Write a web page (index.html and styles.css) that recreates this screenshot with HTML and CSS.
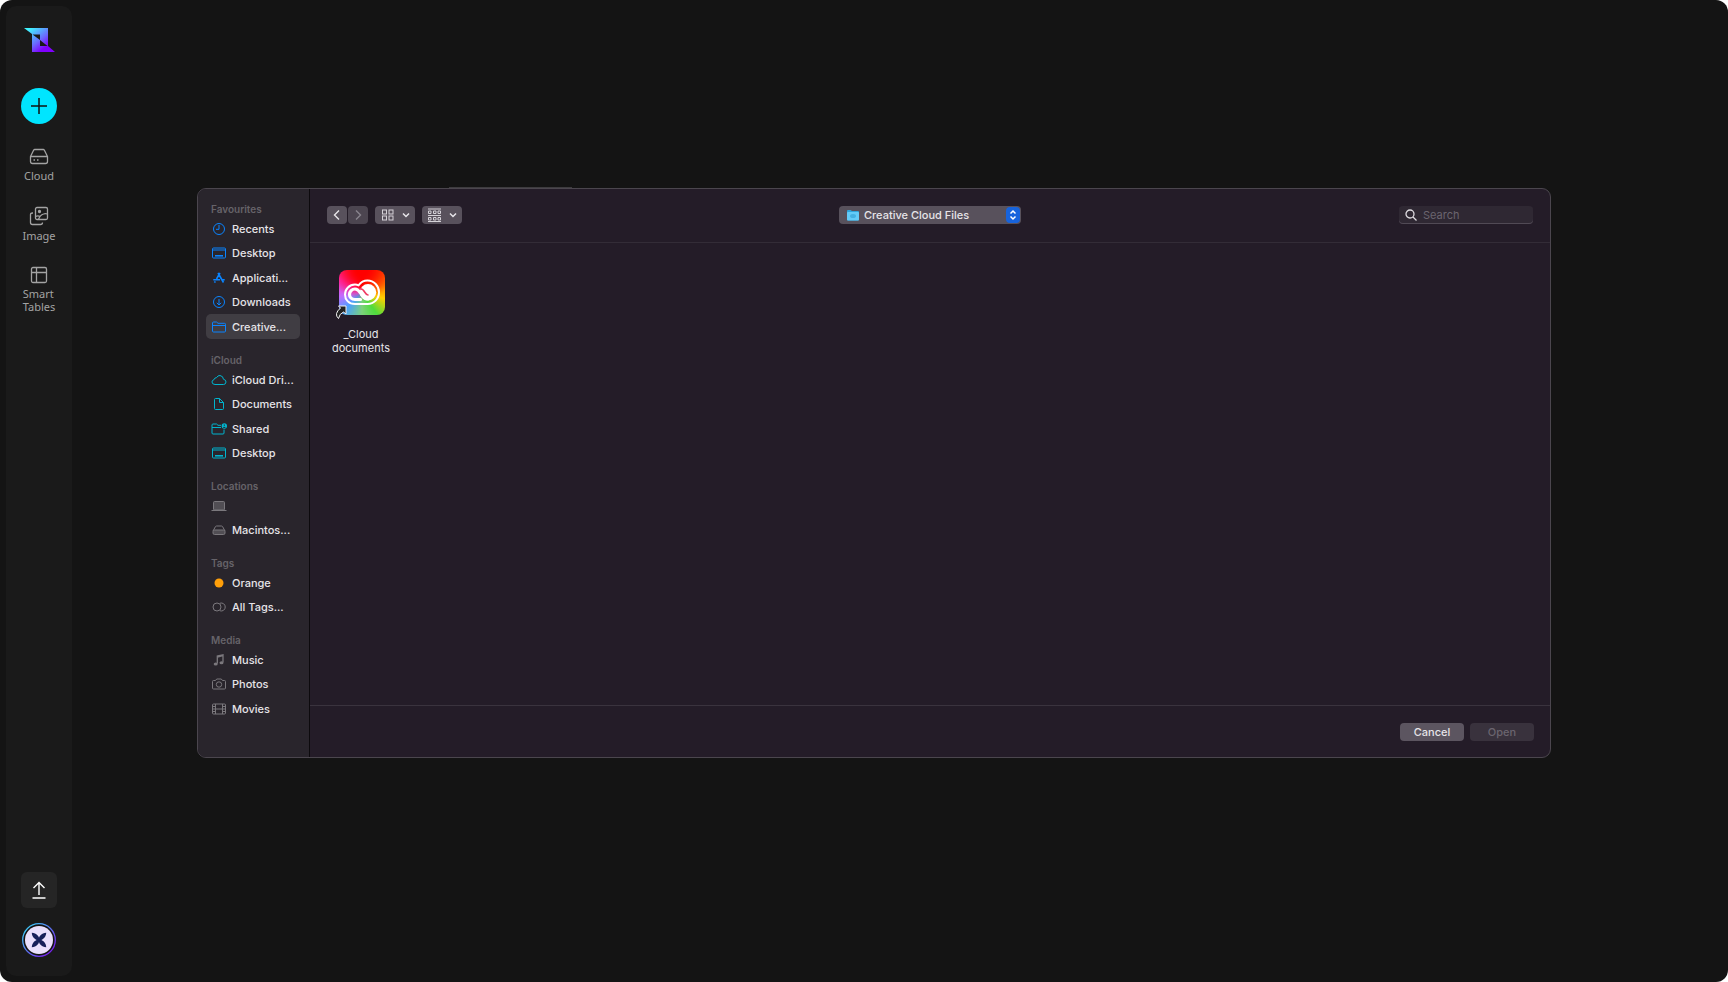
FILE: index.html
```html
<!DOCTYPE html>
<html lang="en">
<head>
	<meta charset="utf-8">
	<title>Files</title>

	<link rel="stylesheet" href="styles.css">
</head>
<body>
	<div class="app">
		<nav class="rail">
			<svg class="logo" width="31" height="24" viewBox="0 0 31 24">
				<defs>
					<linearGradient id="logoFill" x1="0" y1="0" x2="1" y2="1">
						<stop offset="0.1" stop-color="#3ff5ff"/>
						<stop offset="0.5" stop-color="#6a6cff"/>
						<stop offset="0.75" stop-color="#8000ff"/>
					</linearGradient>
				</defs>
				<path fill="url(#logoFill)" fill-rule="evenodd" d="M0 0H24V18L31 24H8V6ZM8.500 6.500L16 12V6.500ZM16 12V18H23.500Z"/>
			</svg>
			<button class="add" aria-label="New">
				<svg width="16" height="16" viewBox="0 0 16 16" fill="none" stroke="#111" stroke-width="1.500"><path d="M8 0V16M0 8H16"/></svg>
			</button>
			<a class="rail-link" href="#">
				<svg width="20" height="18" viewBox="0 0 20 18" fill="none" stroke="#a3a3a3" stroke-width="1.300" stroke-linejoin="round"><path d="M1.500 8.500L4.600 2.200Q5 1.500 5.800 1.500H14.200Q15 1.500 15.400 2.200L18.500 8.500V13.500Q18.500 15.500 16.500 15.500H3.500Q1.500 15.500 1.500 13.500ZM1.500 8.500H18.500M4.500 12H6M8 12H9.500"/></svg>
				<span>Cloud</span>
			</a>
			<a class="rail-link" href="#">
				<svg width="20" height="20" viewBox="0 0 20 20" fill="none" stroke="#a3a3a3" stroke-width="1.300" stroke-linejoin="round"><rect x="6.500" y="1.500" width="12" height="12" rx="1.500"/><path d="M4 7H3.500Q1.500 7 1.500 8.500V16.500Q1.500 18.500 3.500 18.500H11.500Q13.500 18.500 13.500 16.500M9.500 13.500Q11 9 14.500 8Q16.500 7.300 18.500 8M6.500 10.500Q9 9.200 11 10.500"/><circle cx="10.500" cy="5.500" r="1" fill="#a3a3a3"/></svg>
				<span>Image</span>
			</a>
			<a class="rail-link" href="#">
				<svg width="20" height="18" viewBox="0 0 20 18" fill="none" stroke="#a3a3a3" stroke-width="1.300"><rect x="2.500" y="1.500" width="15" height="15" rx="1.500"/><path d="M2.500 6.500H17.500M7.500 1.500V16.500"/></svg>
				<span>Smart<br>Tables</span>
			</a>
			<div class="rail-bottom">
				<button class="upload" aria-label="Upload">
					<svg width="18" height="18" viewBox="0 0 18 18" fill="none" stroke="#fff" stroke-width="1.400"><path d="M9 14V2M3.500 7L9 1.500L14.500 7M2.500 17H15.500"/></svg>
				</button>
				<button class="avatar" aria-label="Account">
					<svg width="34" height="34" viewBox="0 0 34 34">
						<defs>
							<linearGradient id="ring" x1="0" y1="0" x2="1" y2="1">
								<stop offset="0.1" stop-color="#3ecbf5"/>
								<stop offset="0.9" stop-color="#7a18f0"/>
							</linearGradient>
						</defs>
						<circle cx="17" cy="17" r="16.300" fill="#141414" stroke="url(#ring)" stroke-width="1.300"/>
						<circle cx="17" cy="17" r="14" fill="#eadffc"/>
						<g fill="#17205a">
							<path id="leaf" d="M17.500 17.500C13.500 17.500 10 14.500 9.800 9.800C14.500 10 17.500 13.500 17.500 17.500Z"/>
							<use href="#leaf" transform="rotate(90 17 17)"/>
							<use href="#leaf" transform="rotate(180 17 17)"/>
							<use href="#leaf" transform="rotate(270 17 17)"/>
						</g>
					</svg>
				</button>
			</div>
		</nav>

		<main class="stage">
			<div class="dialog" role="dialog" aria-label="Open file">
				<aside class="places">
					<section class="group">
						<h2>Favourites</h2>
						<a href="#" class="blue"><svg viewBox="0 0 16 16"><circle cx="8" cy="8" r="5.500"/><path d="M8 4V8.300H5"/></svg>Recents</a>
						<a href="#" class="blue"><svg viewBox="0 0 16 16"><rect x="1.500" y="3" width="13" height="10" rx="1"/><path d="M2 5H14"/><path d="M4 10.800H12" stroke-width="1.600"/></svg>Desktop</a>
						<a href="#" class="blue"><svg viewBox="0 0 16 16"><path d="M7 3L12.500 12.500M9 3L5.500 9M4.300 11.300L3.500 12.700M2.300 9.800H9M11 9.800H13.700" stroke-width="1.600"/></svg>Applicati...</a>
						<a href="#" class="blue"><svg viewBox="0 0 16 16"><circle cx="8" cy="8" r="5.500"/><path d="M8 5V11M5.800 8.800L8 11L10.200 8.800"/></svg>Downloads</a>
						<a href="#" class="blue current"><svg viewBox="0 0 16 16"><path d="M1.500 12V4Q1.500 3 2.500 3H5.500L7 4.300H13.500Q14.500 4.300 14.500 5.300V12Q14.500 13 13.500 13H2.500Q1.500 13 1.500 12ZM1.500 6.500H14.500"/></svg>Creative...</a>
					</section>
					<section class="group">
						<h2>iCloud</h2>
						<a href="#" class="teal"><svg viewBox="0 0 16 16"><path d="M4 12.500Q1 12.300 1 10Q1 8 3 7.700Q3.500 5.500 5.500 5.700Q6.800 3.300 9 3.500Q12.200 4 12.500 7.300Q15 7.700 15 10Q14.800 12.500 12.500 12.500Z"/></svg>iCloud Dri...</a>
						<a href="#" class="teal"><svg viewBox="0 0 16 16"><path d="M4.500 2.500H8.500L12.500 6.500V12.500Q12.500 13.500 11.500 13.500H4.500Q3.500 13.500 3.500 12.500V3.500Q3.500 2.500 4.500 2.500ZM8.500 2.500V6.500H12.500"/></svg>Documents</a>
						<a href="#" class="teal"><svg viewBox="0 0 16 16"><path d="M10 4.300H7L5.500 3H2Q1 3 1 4V12Q1 13 2 13H12Q13 13 13 12V8.500M1 6.500H10"/><circle cx="13.300" cy="5" r="2.700" fill="currentColor" stroke="none"/><path d="M13.300 3.500V4.800M12.200 6.400H14.400" stroke="#29252c"/></svg>Shared</a>
						<a href="#" class="teal"><svg viewBox="0 0 16 16"><rect x="1.500" y="3" width="13" height="10" rx="1"/><path d="M2 5H14"/><path d="M4 10.800H12" stroke-width="1.600"/></svg>Desktop</a>
					</section>
					<section class="group">
						<h2>Locations</h2>
						<a href="#" class="grey" aria-label="This computer"><svg viewBox="0 0 16 16"><rect x="2.500" y="3.500" width="11" height="8.500" rx="1" fill="#514e54"/><path d="M0.500 12.500H15.500"/></svg></a>
						<a href="#" class="grey"><svg viewBox="0 0 16 16"><path d="M2 9L4.500 4.500Q4.800 4 5.500 4H10.500Q11.200 4 11.500 4.500L14 9"/><rect x="2" y="8" width="12" height="4.500" rx="1.500" fill="#514e54"/></svg>Macintos...</a>
					</section>
					<section class="group">
						<h2>Tags</h2>
						<a href="#"><svg viewBox="0 0 16 16"><circle cx="8" cy="8" r="4.500" fill="#ff9f0a" stroke="none"/></svg>Orange</a>
						<a href="#" class="grey"><svg viewBox="0 0 16 16"><circle cx="6" cy="8" r="4"/><path d="M9 4.200A4 4 0 1 1 9 11.800"/></svg>All Tags...</a>
					</section>
					<section class="group">
						<h2>Media</h2>
						<a href="#" class="grey"><svg viewBox="0 0 16 16"><path d="M6.300 11.500V4L12 2.700V10.300M6.300 5L12 3.700" stroke-width="1.300"/><ellipse cx="4.700" cy="12" rx="2" ry="1.500" fill="currentColor" stroke="none"/><ellipse cx="10.500" cy="10.700" rx="2" ry="1.500" fill="currentColor" stroke="none"/></svg>Music</a>
						<a href="#" class="grey"><svg viewBox="0 0 16 16"><path d="M2.500 4.500H4.500L5.700 3H10.300L11.500 4.500H13.500Q14.500 4.500 14.500 5.500V12Q14.500 13 13.500 13H2.500Q1.500 13 1.500 12V5.500Q1.500 4.500 2.500 4.500Z"/><circle cx="8" cy="8.500" r="2.700"/></svg>Photos</a>
						<a href="#" class="grey"><svg viewBox="0 0 16 16"><rect x="1.500" y="3" width="13" height="10" rx="1"/><path d="M4.500 3V13M11.500 3V13M4.500 8H11.500M2 5.500H4.500M2 8H4.500M2 10.500H4.500M11.500 5.500H14M11.500 8H14M11.500 10.500H14"/></svg>Movies</a>
					</section>
				</aside>

				<div class="browser">
					<header class="toolbar">
						<div class="tools">
							<div class="history">
								<button class="tool" aria-label="Back"><svg width="8" height="12" viewBox="0 0 8 12" fill="none" stroke="#e8e6ea" stroke-width="1.400"><path d="M6 1.500L1.500 6L6 10.500"/></svg></button>
								<button class="tool" aria-label="Forward" disabled><svg width="8" height="12" viewBox="0 0 8 12" fill="none" stroke="#89848d" stroke-width="1.400"><path d="M2 1.500L6.500 6L2 10.500"/></svg></button>
							</div>
							<button class="tool wide" aria-label="Icon view">
								<svg width="14" height="12" viewBox="0 0 14 12" fill="none" stroke="#d5d2d8"><rect x="2.500" y="1" width="4" height="4"/><rect x="9" y="1" width="4" height="4"/><rect x="2.500" y="7" width="4" height="4"/><rect x="9" y="7" width="4" height="4"/></svg>
								<svg width="8" height="6" viewBox="0 0 8 6" fill="none" stroke="#e8e6ea" stroke-width="1.500"><path d="M1 1.500L4 4.500L7 1.500"/></svg>
							</button>
							<button class="tool wide" aria-label="Group items">
								<svg width="14" height="14" viewBox="0 0 14 14" fill="none" stroke="#d5d2d8"><path d="M1 1H14M1 7.500H14M1 13.500H14"/><path d="M1.500 3H4V5.500H1.500ZM6.500 3H9V5.500H6.500ZM11 3H13.500V5.500H11ZM1.500 9.500H4V12H1.500ZM6.500 9.500H9V12H6.500ZM11 9.500H13.500V12H11Z"/></svg>
								<svg width="8" height="6" viewBox="0 0 8 6" fill="none" stroke="#e8e6ea" stroke-width="1.500"><path d="M1 1.500L4 4.500L7 1.500"/></svg>
							</button>
						</div>
						<div class="folder">
							<svg width="14" height="12" viewBox="0 0 14 12"><path d="M1 2Q1 1 2 1H4.500L6 2H12Q13 2 13 3V10.500Q13 11.500 12 11.500H2Q1 11.500 1 10.500Z" fill="#2fa5dc"/><rect x="1" y="3" width="12" height="8.500" rx="1" fill="#63cbf8"/><ellipse cx="7" cy="7" rx="3" ry="2" fill="#43b0e2"/></svg>
							<select aria-label="Folder"><option>Creative Cloud Files</option></select>
							<span class="stepper"><svg width="8" height="12" viewBox="0 0 8 12" fill="none" stroke="#fff" stroke-width="1.500"><path d="M1.500 4.500L4 2L6.500 4.500M1.500 7.500L4 10L6.500 7.500"/></svg></span>
						</div>
						<label class="search">
							<svg width="12" height="12" viewBox="0 0 12 12" fill="none" stroke="#dedbe0" stroke-width="1.300"><circle cx="5" cy="5" r="4"/><path d="M8 8L11.500 11.500"/></svg>
							<input type="text" placeholder="Search" aria-label="Search">
						</label>
					</header>
					<div class="files">
						<a class="file" href="#">
							<svg width="54" height="50" viewBox="0 0 54 50">
								<foreignObject x="5" y="2" width="46" height="45"><div class="rainbow"></div></foreignObject>
								<path fill="none" stroke="#fff" stroke-width="2" d="M21 36C14.500 36 11 31.500 11 26.500C11 21 15.500 16.500 21 16.500Q23 16.500 24.500 17.300Q28 12.500 33.500 12.500C40 12.500 45 18 45 24.300C45 31 40 36 33.500 36Z"/>
								<circle cx="34" cy="24.300" r="8.200" fill="#fff"/>
								<path fill="none" stroke="#fff" stroke-width="3.200" stroke-linecap="round" d="M26.500 31.500H21C17.500 31.500 15.500 29 15.500 26.500C15.500 23.500 18 21 21 21C24.500 21 25.500 23.500 27.500 26.500C29.500 29.500 31 31 34 31"/>
								<path fill="none" stroke="#ef3c62" stroke-width="1.600" stroke-linecap="round" d="M26 20.800C28.500 20.500 29.500 22 31 24.500Q32.500 27 34 27"/>
								<path fill="#222" stroke="#f4f4f4" stroke-width="1" stroke-linejoin="round" d="M4.500 38H12V46L9.500 44Q5.500 45.500 4.500 50.500Q-0.500 46 6.500 40Z"/>
							</svg>
							<span>_Cloud<br>documents</span>
						</a>
					</div>
					<footer class="actions">
						<button class="btn">Cancel</button>
						<button class="btn" disabled>Open</button>
					</footer>
				</div>
			</div>
		</main>
	</div>
</body>
</html>
```
FILE: styles.css
```css
* {
	box-sizing: border-box;
}

body {
	margin: 0;
	background: #fff;
	font-family: Inter, "Liberation Sans", sans-serif;
	font-size: 11px;
	color: #e6e4e8;
}

a {
	color: inherit;
	text-decoration: none;
}

button {
	border: 0;
	padding: 0;
	font: inherit;
	color: inherit;
}

.app {
	display: flex;
	min-height: 100vh;
	padding: 6px;
	border-radius: 12px;
	background: #141414;
}

/* left rail */
.rail {
	display: flex;
	flex-direction: column;
	align-items: center;
	width: 66px;
	padding: 22px 0 19px;
	border-radius: 10px;
	background: #1a1a1a;
}

.add {
	display: flex;
	align-items: center;
	justify-content: center;
	width: 36px;
	height: 36px;
	margin: 36px 0 24px;
	border-radius: 50%;
	background: #00e5ff;
}

.rail-link {
	display: flex;
	flex-direction: column;
	align-items: center;
	gap: 3px;
	margin-bottom: 24px;
	font-family: "Noto Sans", sans-serif;
	font-size: 11px;
	line-height: 13px;
	color: #a3a3a3;
}

.rail-bottom {
	display: flex;
	flex-direction: column;
	align-items: center;
	gap: 15px;
	margin-top: auto;
}

.upload {
	display: flex;
	align-items: center;
	justify-content: center;
	width: 36px;
	height: 36px;
	border-radius: 6px;
	background: #252525;
}

.avatar {
	background: none;
}

.avatar svg {
	display: block;
}

/* file dialog */
.stage {
	flex: 1;
	padding: 181px 171px 0 125px;
}

/* edge of the panel behind the dialog */
.stage::before {
	content: "";
	display: block;
	width: 123px;
	height: 1px;
	margin-left: 252px;
	background: #3d3b3e;
}

.dialog {
	display: flex;
	border: 1px solid #4b464e;
	border-radius: 9px;
	background: #241c28;
	overflow: hidden;
}

.places {
	width: 112px;
	padding: 14px 9px 36px 8px;
	border-right: 1px solid #0c0a0d;
	background: #29252c;
}

.group + .group {
	margin-top: 15px;
}

.group h2 {
	margin: 0;
	padding-left: 5px;
	font-size: 10px;
	font-weight: 600;
	line-height: 13px;
	color: #666369;
}

.group a {
	display: flex;
	align-items: center;
	gap: 5px;
	height: 25px;
	padding-left: 5px;
	border-radius: 5px;
	font-weight: 500;
	white-space: nowrap;
}

.group a:nth-child(odd) {
	height: 24px;
}

.group svg {
	width: 16px;
	height: 16px;
	fill: none;
	stroke: currentColor;
}

.blue svg {
	color: #0a84ff;
}

.teal svg {
	color: #00b5cf;
}

.grey svg {
	color: #7b787d;
}

.group .current {
	background: #403d43;
}

.browser {
	display: flex;
	flex: 1;
	flex-direction: column;
}

.toolbar {
	display: grid;
	grid-template-columns: 1fr 182px 1fr;
	align-items: center;
	height: 54px;
	padding: 0 17px 2px;
	border-bottom: 1px solid #332c37;
}

.tools {
	display: flex;
	gap: 7px;
}

.history {
	display: flex;
	gap: 1px;
}

.tool {
	display: flex;
	align-items: center;
	justify-content: center;
	width: 20px;
	height: 18px;
	border-radius: 4px;
	background: #58515c;
}

.tool:disabled {
	background: #4c4550;
}

.tool.wide {
	gap: 8px;
	width: 40px;
}

.folder {
	display: flex;
	align-items: center;
	gap: 4px;
	height: 18px;
	padding: 0 1px 0 7px;
	border-radius: 4px;
	background: #58515c;
}

.folder select {
	flex: 1;
	border: 0;
	padding: 0;
	font: inherit;
	font-weight: 500;
	color: inherit;
	background: none;
	appearance: none;
}

.stepper {
	display: flex;
	align-items: center;
	justify-content: center;
	width: 14px;
	height: 16px;
	border-radius: 4px;
	background: #1763dc;
}

.search {
	display: flex;
	align-items: center;
	justify-self: end;
	gap: 6px;
	width: 134px;
	height: 18px;
	padding: 0 6px;
	border-radius: 4px;
	background: #2f2833;
	box-shadow: inset 0 -1px #514a55;
}

.search input {
	flex: 1;
	min-width: 0;
	border: 0;
	padding: 0;
	font: inherit;
	color: inherit;
	background: none;
}

.search input::placeholder {
	color: #6b656f;
}

.files {
	flex: 1;
	padding: 25px 22px;
}

.file {
	display: inline-flex;
	flex-direction: column;
	align-items: center;
	gap: 9px;
	line-height: 14px;
	text-align: center;
}

.file svg {
	overflow: visible;
}

.rainbow {
	height: 45px;
	border-radius: 8px;
	background: radial-gradient(circle at 50% 0, #f00 10%, transparent 60%), conic-gradient(#f00 0deg, #ff7a00 70deg, #ffd000 105deg, #4fdc3c 145deg, #7bd27a 180deg, #4aa0ff 225deg, #c26cff 260deg, #ff2cc0 300deg, #f00 360deg);
}

.actions {
	display: flex;
	justify-content: flex-end;
	gap: 6px;
	padding: 17px 16px 16px;
	border-top: 1px solid #3a333e;
}

.btn {
	width: 64px;
	height: 18px;
	border-radius: 4px;
	background: #5c5560;
	font-weight: 500;
}

.btn:disabled {
	background: #39323d;
	color: #6b656f;
}
```
